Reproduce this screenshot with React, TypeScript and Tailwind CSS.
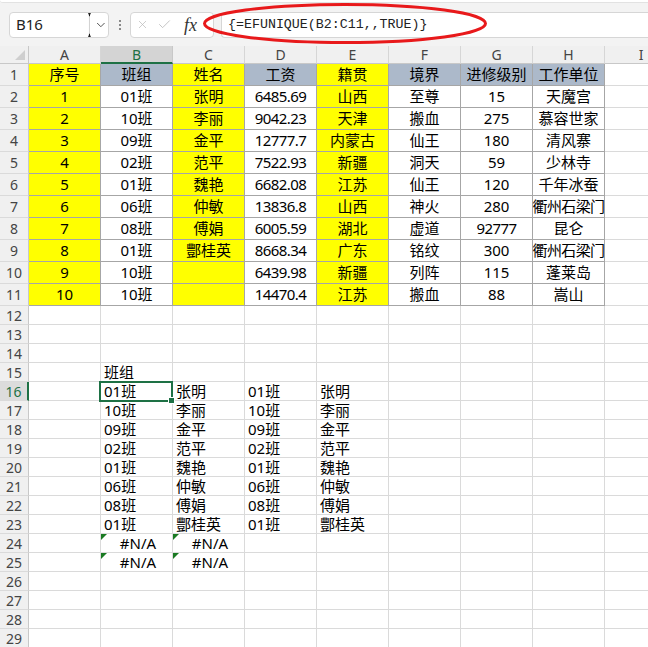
import { Check, ChevronDown, X } from "lucide-react";

const Y = "bg-[#ffff00]";
const G = "bg-[#acb9ca]";
const W = "bg-white";

const COLS = ["A", "B", "C", "D", "E", "F", "G", "H"];

const head: [string, string][] = [
  ["序号", Y],
  ["班组", G],
  ["姓名", Y],
  ["工资", G],
  ["籍贯", Y],
  ["境界", G],
  ["进修级别", G],
  ["工作单位", G],
];

const bodyBg = [Y, W, Y, W, Y, W, W, W];

const data = [
  ["1", "01班", "张明", "6485.69", "山西", "至尊", "15", "天魔宫"],
  ["2", "10班", "李丽", "9042.23", "天津", "搬血", "275", "慕容世家"],
  ["3", "09班", "金平", "12777.7", "内蒙古", "仙王", "180", "清风寨"],
  ["4", "02班", "范平", "7522.93", "新疆", "洞天", "59", "少林寺"],
  ["5", "01班", "魏艳", "6682.08", "江苏", "仙王", "120", "千年冰蚕"],
  ["6", "06班", "仲敏", "13836.8", "山西", "神火", "280", "衢州石梁门"],
  ["7", "08班", "傅娟", "6005.59", "湖北", "虚道", "92777", "昆仑"],
  ["8", "01班", "酆桂英", "8668.34", "广东", "铭纹", "300", "衢州石梁门"],
  ["9", "10班", "", "6439.98", "新疆", "列阵", "115", "蓬莱岛"],
  ["10", "10班", "", "14470.4", "江苏", "搬血", "88", "嵩山"],
];

// rows 12..29, values by column index (A = 0)
const lower: Record<number, string[]> = {
  15: ["", "班组"],
  16: ["", "01班", "张明", "01班", "张明"],
  17: ["", "10班", "李丽", "10班", "李丽"],
  18: ["", "09班", "金平", "09班", "金平"],
  19: ["", "02班", "范平", "02班", "范平"],
  20: ["", "01班", "魏艳", "01班", "魏艳"],
  21: ["", "06班", "仲敏", "06班", "仲敏"],
  22: ["", "08班", "傅娟", "08班", "傅娟"],
  23: ["", "01班", "酆桂英", "01班", "酆桂英"],
};

const naRows = [24, 25];

function RowHead({ n, active }: { n: number; active?: boolean }) {
  if (active) {
    return (
      <div className="flex w-[29px] shrink-0 items-center justify-center border-b border-r-2 border-b-[#dadada] border-r-[#1e7145] bg-[#dcdcdc] text-[14px] text-[#1e7145]">
        {n}
      </div>
    );
  }
  return (
    <div className="flex w-[29px] shrink-0 items-center justify-center border-b border-r border-b-[#dadada] border-r-[#c8c8c8] bg-[#f0f0f0] text-[14px] text-[#444]">
      {n}
    </div>
  );
}

function Toolbar() {
  return (
    <div className="relative h-[46px] bg-[#f3f3f3]">
      <div className="h-[3px] rounded-bl-[6px] border-b border-[#e2e2e2] bg-white" />
      <div className="flex h-[43px] items-center pl-[9px]">
        <div className="flex h-[26px] w-[100px] shrink-0 items-center rounded-[4px] border border-[#d6d6d6] bg-white">
          <span className="w-[80px] pl-[6px] text-[15px] text-[#222]">B16</span>
          <svg width="4" height="24" viewBox="0 0 4 24">
            <line x1="1.5" y1="0" x2="1.5" y2="24" stroke="#d0d0d0" />
            <path d="M0 0.5H3M1.5 0V3M0 23.5H3M1.5 21V24" stroke="#111" />
          </svg>
          <ChevronDown size={14} strokeWidth={1.6} className="ml-[2px] text-[#444]" />
        </div>
        <div className="flex w-[21px] shrink-0 flex-col items-center gap-[2px]">
          <span className="h-[2px] w-[2px] bg-[#8a8a8a]" />
          <span className="h-[2px] w-[2px] bg-[#8a8a8a]" />
          <span className="h-[2px] w-[2px] bg-[#8a8a8a]" />
        </div>
        <div className="flex h-[26px] w-[84px] shrink-0 items-center rounded-[4px] border border-[#d6d6d6] bg-white pl-[5px]">
          <X size={13} strokeWidth={1.3} className="text-[#b8b8b8]" />
          <Check size={15} strokeWidth={1.3} className="ml-[8px] text-[#b8b8b8]" />
          <span className="ml-[12px] font-['Liberation_Serif',serif] text-[18px] italic leading-none text-[#333]">
            fx
          </span>
        </div>
        <div className="ml-[7px] flex h-[26px] flex-1 items-center rounded-l-[4px] border border-r-0 border-[#d6d6d6] bg-white pl-[6px] font-['Liberation_Mono',monospace] text-[13.3px] text-[#222]">
          {"{=EFUNIQUE(B2:C11,,TRUE)}"}
        </div>
      </div>
      <svg className="pointer-events-none absolute left-0 top-0 z-20" width="648" height="48">
        <ellipse cx="345" cy="23.5" rx="140.5" ry="19" fill="none" stroke="#e8191b" strokeWidth="3" />
      </svg>
    </div>
  );
}

function HeaderRow() {
  return (
    <div className="flex h-[18px] bg-[#f0f0f0] text-[14px] text-[#444]">
      <div className="w-[29px] shrink-0 border-b border-r border-[#c8c8c8] pl-[15px] pt-[4px]">
        <svg width="10" height="10" viewBox="0 0 10 10">
          <path d="M10 0V10H0Z" fill="#cfcfcf" />
        </svg>
      </div>
      {COLS.map((c) =>
        c === "B" ? (
          <div
            key={c}
            className="flex w-[72px] shrink-0 items-center justify-center border-b-2 border-r border-b-[#1e7145] border-r-[#c8c8c8] bg-[#d4d4d4] text-[#1e7145]"
          >
            {c}
          </div>
        ) : (
          <div
            key={c}
            className="flex w-[72px] shrink-0 items-center justify-center border-b border-r border-b-[#c8c8c8] border-r-[#d6d6d6]"
          >
            {c}
          </div>
        )
      )}
      <div className="flex w-[72px] shrink-0 items-center justify-center border-b border-[#c8c8c8]">I</div>
    </div>
  );
}

function TableRow({ n, cells, bgs }: { n: number; cells: string[]; bgs: string[] }) {
  return (
    <div className="flex h-[22px]">
      <RowHead n={n} />
      {cells.map((t, i) => (
        <div
          key={i}
          className={`flex w-[72px] shrink-0 items-center justify-center whitespace-nowrap border-b border-r border-[#a6a6a6] ${bgs[i]} ${t.length > 4 ? "tracking-[-0.6px]" : ""}`}
        >
          {t}
        </div>
      ))}
      <div className="w-[72px] shrink-0 border-b border-[#dadada]" />
    </div>
  );
}

function LowerRow({ n }: { n: number }) {
  const vals = lower[n] ?? [];
  const na = naRows.includes(n);
  return (
    <div className="flex h-[19px]">
      <RowHead n={n} active={n === 16} />
      {COLS.map((c, i) => {
        const v = vals[i] ?? "";
        const isNa = na && (i === 1 || i === 2);
        return (
          <div
            key={c}
            className="relative flex w-[72px] shrink-0 items-center whitespace-nowrap border-b border-r border-[#dadada] pl-[3px]"
          >
            {isNa ? (
              <>
                <span className="absolute left-0 top-0 h-0 w-0 border-r-[6px] border-t-[6px] border-r-transparent border-t-[#1a7a22]" />
                <span className="w-full text-center">#N/A</span>
              </>
            ) : (
              v
            )}
            {n === 16 && i === 1 ? (
              <span className="absolute -bottom-[2px] -left-[2px] -right-[1px] -top-[1px] z-10 border-2 border-[#1e7145]">
                <span className="absolute -bottom-[4px] -right-[4px] h-[7px] w-[7px] border border-white bg-[#1e7145]" />
              </span>
            ) : null}
          </div>
        );
      })}
      <div className="w-[72px] shrink-0 border-b border-[#dadada]" />
    </div>
  );
}

export default function App() {
  const lowerNums = Array.from({ length: 18 }, (_, i) => i + 12);
  return (
    <div className="h-[647px] w-[648px] overflow-hidden bg-white font-['Noto_Sans','Noto_Sans_CJK_SC',sans-serif] text-[15px] text-black">
      <Toolbar />
      <HeaderRow />
      <TableRow n={1} cells={head.map((h) => h[0])} bgs={head.map((h) => h[1])} />
      {data.map((r, i) => (
        <TableRow key={i} n={i + 2} cells={r} bgs={bodyBg} />
      ))}
      {lowerNums.map((n) => (
        <LowerRow key={n} n={n} />
      ))}
    </div>
  );
}
